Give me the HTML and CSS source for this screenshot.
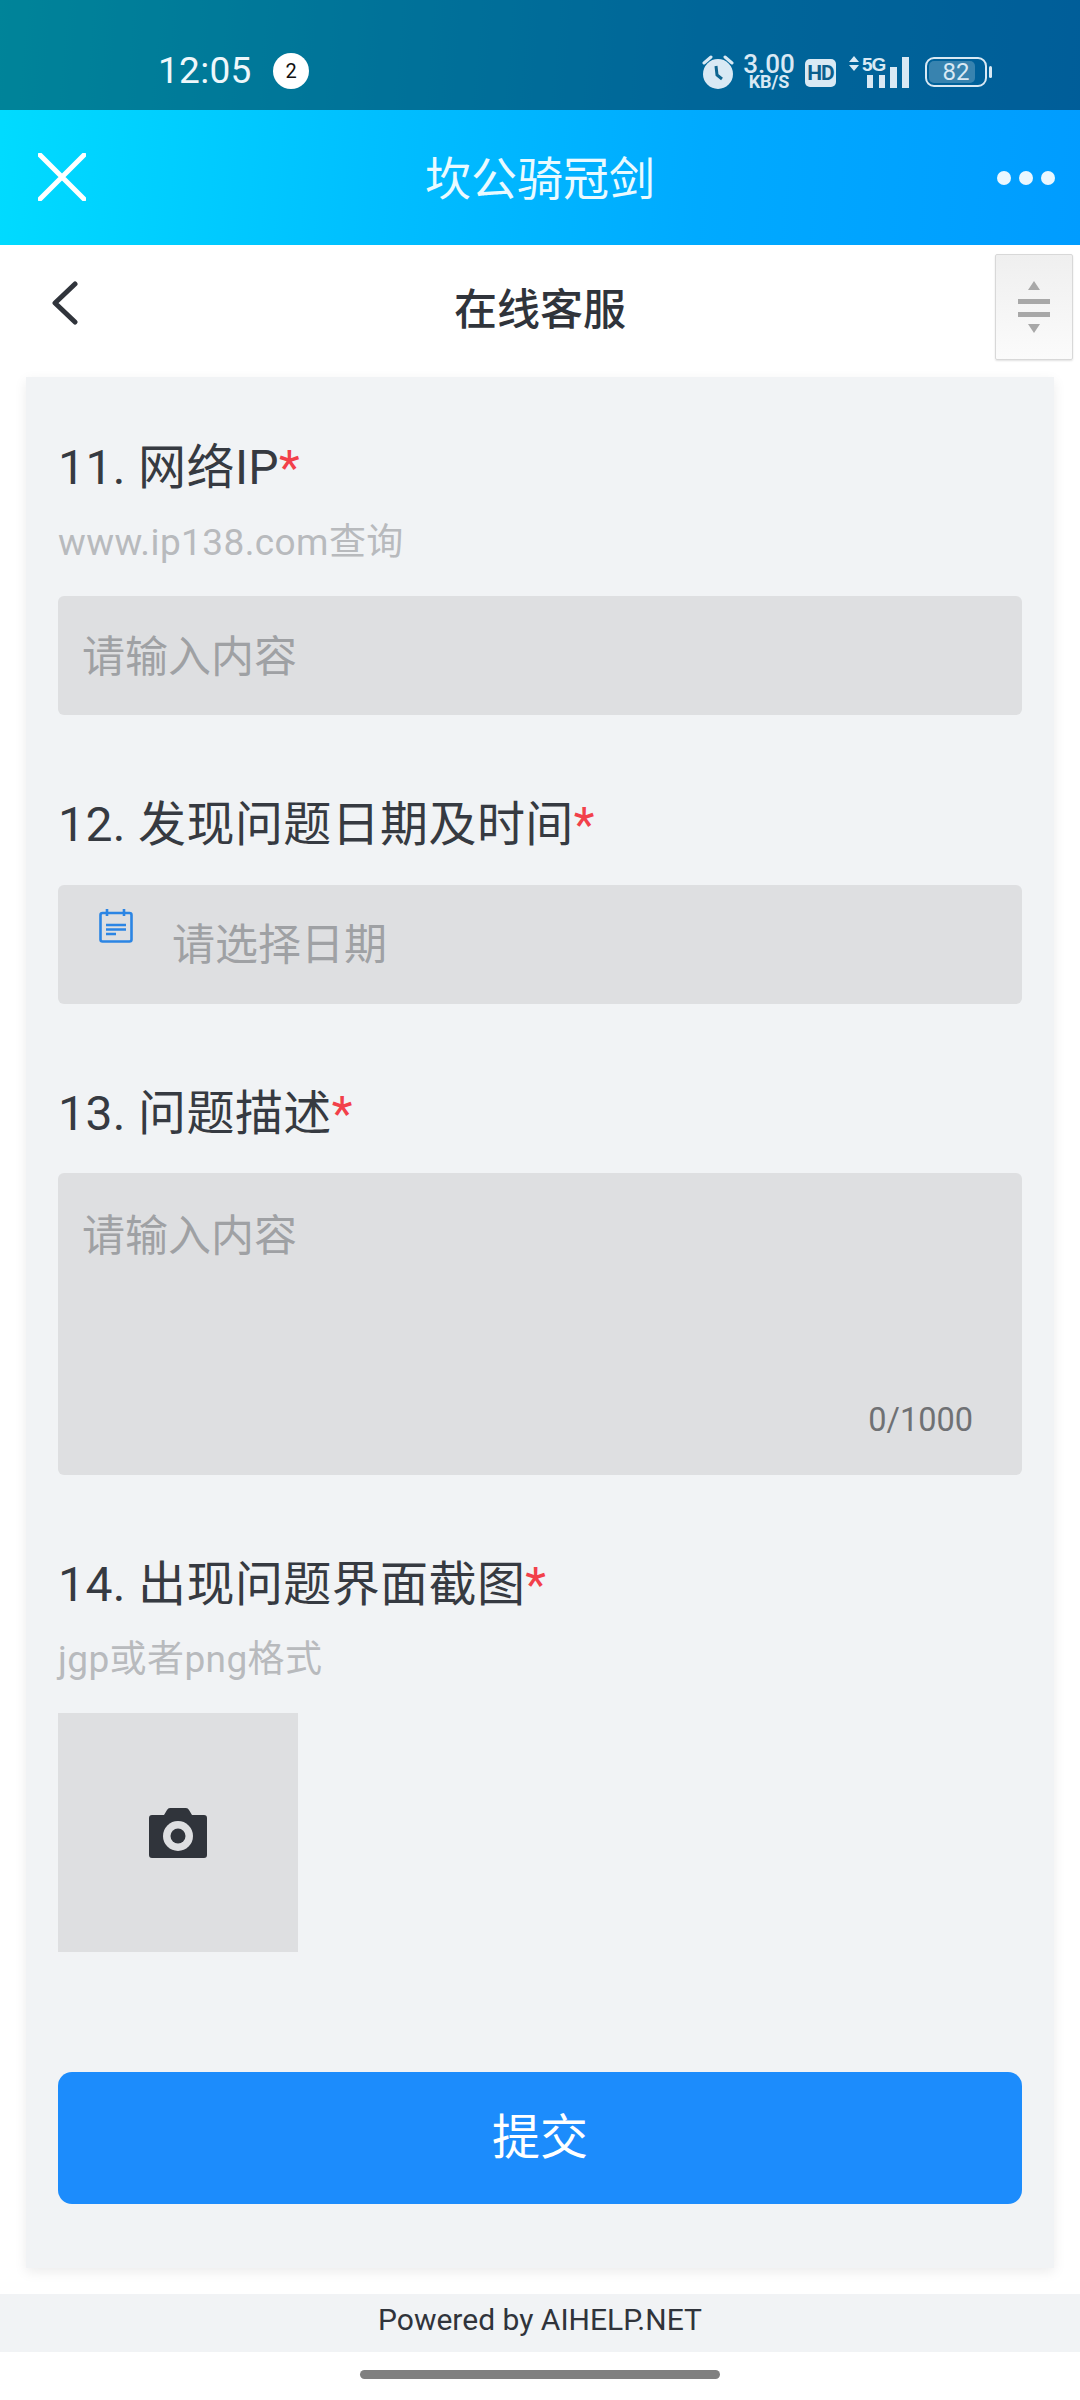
FILE: index.html
```html
<!DOCTYPE html>
<html lang="zh">
<head>
<meta charset="utf-8">
<title>在线客服</title>
<link rel="stylesheet" href="styles.css">
</head>
<body>
<div class="top-band">
  <div class="status">
    <span class="time">12:05</span>
    <span class="badge">2</span>
    <div class="status-right">
      <svg class="alarm" viewBox="0 0 32 34" aria-hidden="true">
        <path class="alarm-ear" d="M2 8 9 2M30 8 23 2"/>
        <circle class="alarm-face" cx="16" cy="19" r="15"/>
        <path class="alarm-hand" d="M14 11 15 20 20 24"/>
      </svg>
      <div class="speed"><span class="speed-num">3.00</span><span class="speed-unit">KB/S</span></div>
      <span class="hd">HD</span>
      <svg class="signal" viewBox="0 0 60 32" aria-hidden="true">
        <path class="sig-fill" d="M5 0 10 6H0ZM5 15 10 9H0Z"/>
        <text class="sig-text" x="13" y="15">5G</text>
        <rect class="sig-fill" x="18" y="19" width="6" height="13"/>
        <rect class="sig-fill" x="30" y="19" width="6" height="13"/>
        <rect class="sig-fill" x="41" y="11" width="7" height="21"/>
        <rect class="sig-fill" x="53" y="1" width="7" height="31"/>
      </svg>
      <div class="battery">
        <div class="battery-body"><span class="battery-fill"></span><span class="battery-num">82</span></div>
        <span class="battery-nub"></span>
      </div>
    </div>
  </div>
  <div class="titlebar">
    <svg class="close" viewBox="0 0 48 48" aria-hidden="true"><path d="M2 2 46 46M46 2 2 46"/></svg>
    <span class="app-title">坎公骑冠剑</span>
    <div class="dots"><i></i><i></i><i></i></div>
  </div>
</div>

<header class="subhead">
  <svg class="back" viewBox="0 0 26 44" aria-hidden="true"><path d="M23 3 3 22 23 41"/></svg>
  <h1 class="subtitle">在线客服</h1>
  <div class="scroller">
    <svg viewBox="0 0 34 52" aria-hidden="true">
      <path class="scroll-mark" d="M17 0 23 9H11ZM17 52 23 43H11Z"/>
      <rect class="scroll-mark" x="1" y="18" width="32" height="5"/>
      <rect class="scroll-mark" x="1" y="31" width="32" height="5"/>
    </svg>
  </div>
</header>

<main class="card">
  <section class="field">
    <div class="label label-sub">11. 网络IP<span class="req">*</span></div>
    <div class="hint">www.ip138.com查询</div>
    <div class="input"><span class="ph">请输入内容</span></div>
  </section>
  <section class="field">
    <div class="label">12. 发现问题日期及时间<span class="req">*</span></div>
    <div class="input date">
      <svg class="cal" viewBox="0 0 34 34" aria-hidden="true">
        <rect class="cal-line" x="1.5" y="4" width="31" height="28.5" rx="2"/>
        <path class="cal-line" d="M8 0V7M25 0V7"/>
        <path class="cal-line" d="M7 16H27M7 20.5H27M7 25H17"/>
      </svg>
      <span class="ph">请选择日期</span>
    </div>
  </section>
  <section class="field">
    <div class="label">13. 问题描述<span class="req">*</span></div>
    <div class="textarea">
      <span>请输入内容</span>
      <span class="counter">0/1000</span>
    </div>
  </section>
  <section class="field">
    <div class="label label-sub">14. 出现问题界面截图<span class="req">*</span></div>
    <div class="hint">jgp或者png格式</div>
    <div class="upload">
      <svg class="camera" viewBox="0 0 58 50" aria-hidden="true">
        <path class="cam-body" d="M3 7H15L18 2Q19 0 21 0H37Q39 0 40 2L43 7H55Q58 7 58 10V47Q58 50 55 50H3Q0 50 0 47V10Q0 7 3 7Z"/>
        <circle class="cam-ring" cx="29" cy="28" r="15"/>
        <circle class="cam-body" cx="29" cy="28" r="7.5"/>
      </svg>
    </div>
  </section>
  <button class="submit" type="button">提交</button>
</main>

<footer class="powered">Powered by AIHELP.NET</footer>
<div class="home-wrap"><div class="home"></div></div>
</body>
</html>
```

FILE: styles.css
```css
* { box-sizing: border-box; }
html, body { margin: 0; padding: 0; }
body {
  width: 1080px;
  height: 2400px;
  overflow: hidden;
  background: #fff;
  color: #30343b;
  font-family: Roboto, "Noto Sans CJK SC", sans-serif;
  display: flex;
  flex-direction: column;
}

/* top band */
.top-band {
  height: 245px;
  flex: none;
  background: linear-gradient(95deg, #00dcff 0%, #00bfff 35%, #00aaff 65%, #009cff 100%);
}
.status {
  height: 110px;
  padding: 48px 88px 0 158px;
  display: flex;
  align-items: flex-start;
  background: rgba(0, 0, 0, .4);
  color: #fff;
}
.time { font-size: 37px; line-height: 46px; width: 115px; letter-spacing: .3px; color: #eef7fb; }
.badge {
  width: 36px;
  height: 36px;
  margin-top: 5px;
  border-radius: 50%;
  background: #fff;
  color: #111;
  font-size: 20px;
  line-height: 36px;
  text-align: center;
}
.status-right { margin-left: auto; display: flex; align-items: flex-start; color: #d9e9f4; }
.alarm { width: 32px; height: 34px; margin-top: 7px; }
.alarm-ear { fill: none; stroke: #d9e9f4; stroke-width: 3; stroke-linecap: round; }
.alarm-face { fill: #d9e9f4; }
.alarm-hand { fill: none; stroke: #0f6590; stroke-width: 3; }
.speed { width: 52px; margin-left: 9px; display: flex; flex-direction: column; align-items: center; margin-top: 6px; }
.speed-num { font-size: 26px; line-height: 20px; font-weight: 500; }
.speed-unit { font-size: 18px; line-height: 16px; font-weight: 700; }
.hd {
  width: 31px;
  height: 28px;
  margin: 11px 0 0 10px;
  border-radius: 5px;
  background: #d9e9f4;
  color: #0b5e8c;
  font-size: 21px;
  line-height: 28px;
  font-weight: 700;
  letter-spacing: -1px;
  text-align: center;
}
.signal { width: 60px; height: 32px; margin: 8px 0 0 13px; overflow: visible; }
.sig-fill { fill: #d9e9f4; }
.sig-text { fill: #d9e9f4; font-family: "Liberation Sans", sans-serif; font-size: 19px; font-weight: 700; letter-spacing: -1px; }
.battery { margin: 9px 0 0 16px; display: flex; align-items: center; }
.battery-body {
  position: relative;
  width: 62px;
  height: 30px;
  border: 2px solid #d9e9f4;
  border-radius: 9px;
  text-align: center;
}
.battery-fill {
  position: absolute;
  left: 2px;
  top: 2px;
  bottom: 2px;
  width: 46px;
  border-radius: 5px;
  background: rgba(255, 255, 255, .22);
}
.battery-num { position: relative; font-size: 24px; line-height: 26px; display: block; }
.battery-nub { width: 3px; height: 12px; margin-left: 2px; background: #d9e9f4; border-radius: 2px; }

.titlebar {
  height: 135px;
  display: flex;
  align-items: center;
  justify-content: center;
  position: relative;
}
.close {
  position: absolute;
  left: 38px;
  top: 43px;
  width: 48px;
  height: 48px;
  fill: none;
  stroke: #fff;
  stroke-width: 5;
  stroke-linecap: round;
}
.app-title { font-size: 46px; line-height: 60px; color: #eafaff; margin-top: 2px; }
.dots { position: absolute; right: 25px; top: 61px; display: flex; gap: 8px; }
.dots i { width: 14px; height: 14px; border-radius: 50%; background: #eaf7ff; }

/* sub header */
.subhead {
  height: 132px;
  flex: none;
  position: relative;
  display: flex;
  align-items: center;
  justify-content: center;
}
.back {
  position: absolute;
  left: 52px;
  top: 36px;
  width: 26px;
  height: 44px;
  fill: none;
  stroke: #30343b;
  stroke-width: 5;
  stroke-linecap: round;
  stroke-linejoin: round;
}
.subtitle { margin: 0; font-size: 43px; line-height: 60px; font-weight: 500; color: #30343b; padding-bottom: 3px; }
.scroller {
  position: absolute;
  right: 7px;
  top: 9px;
  width: 78px;
  height: 106px;
  border: 1px solid #d8d8d8;
  border-radius: 2px;
  background: linear-gradient(#efefef, #fbfbfb);
  box-shadow: 0 1px 2px rgba(0, 0, 0, .12);
  display: flex;
  align-items: center;
  justify-content: center;
}
.scroller svg { width: 34px; height: 52px; }
.scroll-mark { fill: #a8a8a8; }

/* card */
.card {
  width: 1028px;
  height: 1891px;
  flex: none;
  margin-left: 26px;
  padding: 53px 32px 64px;
  background: #f1f3f5;
  box-shadow: 0 4px 12px rgba(0, 0, 0, .08);
  display: flex;
  flex-direction: column;
}
.field { margin-bottom: 72px; }
.field:last-of-type { margin-bottom: 120px; }
.label { font-size: 48px; line-height: 72px; padding-top: 2px; margin-bottom: 23.5px; letter-spacing: .4px; color: #363a41; }
.label-sub { margin-bottom: 19px; }
.req { color: #f2404a; }
.hint { font-size: 37px; line-height: 40px; margin-bottom: 33px; color: #b8babd; letter-spacing: .4px; }
.input {
  height: 119px;
  padding: 0 24px 6px;
  border-radius: 6px;
  background: #dedfe1;
  color: #9fa1a4;
  font-size: 43px;
  display: flex;
  align-items: center;
}
.date { padding-left: 41px; }
.cal {
  width: 34px;
  height: 34px;
  margin: -31px 39px 0 0;
  fill: none;
  flex: none;
}
.cal-line { stroke: #2b85e4; stroke-width: 2.6; fill: none; }
.textarea {
  position: relative;
  height: 302px;
  padding: 38px 24px;
  border-radius: 6px;
  background: #dedfe1;
  color: #9fa1a4;
  font-size: 43px;
  line-height: 50px;
}
.counter {
  position: absolute;
  right: 49px;
  bottom: 35px;
  font-size: 32.5px;
  line-height: 40px;
  color: #6f7174;
}
.upload {
  width: 240px;
  height: 239px;
  background: #dedfe1;
  display: flex;
  align-items: center;
  justify-content: center;
}
.camera { width: 58px; height: 50px; }
.cam-body { fill: #30343b; }
.cam-ring { fill: #dedfe1; }
.submit {
  height: 132px;
  flex: none;
  border: 0;
  padding: 0;
  border-radius: 14px;
  background: #1c8cfc;
  color: #fff;
  font-family: inherit;
  font-size: 48px;
  line-height: 132px;
}

/* footer */
.powered {
  height: 58px;
  flex: none;
  margin-top: 26px;
  background: #f1f3f5;
  text-align: center;
  font-size: 30px;
  line-height: 52px;
  color: #30343b;
}
.home-wrap { padding-top: 18px; display: flex; justify-content: center; }
.home { width: 360px; height: 9px; border-radius: 5px; background: #808080; }
```
